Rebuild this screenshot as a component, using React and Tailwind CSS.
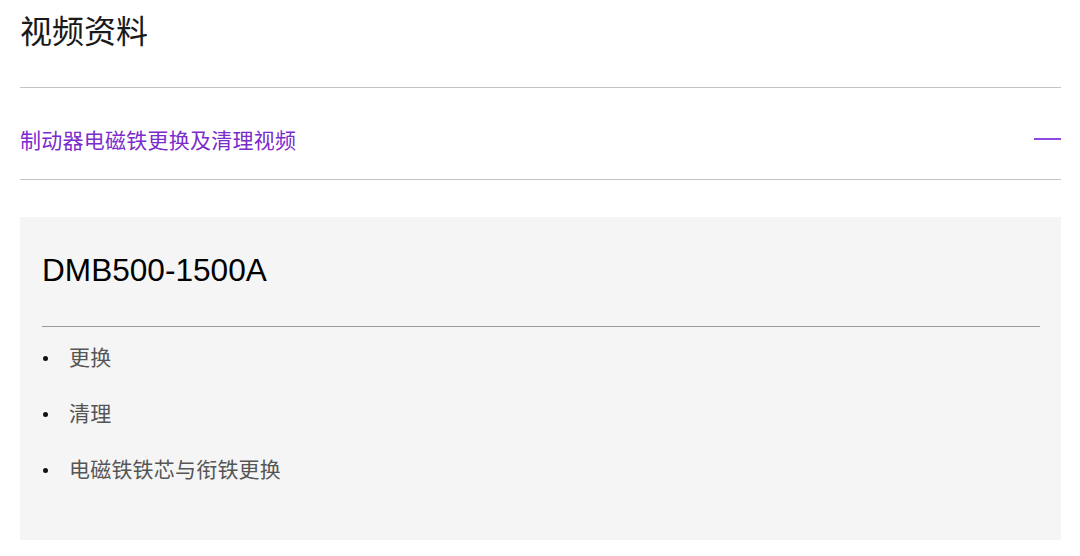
export default function App() {
  const items = ["更换", "清理", "电磁铁铁芯与衔铁更换"];
  return (
    <div
      className="w-[1080px] h-[556px] bg-white overflow-hidden px-[20px] pt-[12px]"
      style={{ fontFamily: '"Liberation Sans", Arial, "Noto Sans CJK SC", sans-serif' }}
    >
      <div className="w-[1041px]">
        <h1 className="text-[32px] leading-[40px] text-[#1a1a1a] font-normal m-0">视频资料</h1>
        <div className="mt-[35px] border-t border-[#c4c4c4]" />
        <div className="flex items-center justify-between pt-[38px] pb-[23px] border-b border-[#c4c4c4]">
          <span className="text-[21px] leading-[30px] tracking-[0.25px] text-[#7a2ccc]">制动器电磁铁更换及清理视频</span>
          <span className="block w-[27px] h-[2px] bg-[#8a4ae0] mb-[4px]" />
        </div>
        <div className="mt-[37px] bg-[#f5f5f5] pl-[22px] pr-[21px] pt-[33px] pb-[56px]">
          <div className="text-[31.6px] leading-[40px] text-black">DMB500-1500A</div>
          <div className="mt-[36px] border-t border-[#999999]" />
          <ul className="pt-[17px] flex flex-col gap-[28px]">
            {items.map((t) => (
              <li key={t} className="flex items-center h-[28px]">
                <span className="block w-[5px] h-[5px] rounded-full bg-[#111] ml-[1px] mt-[1px]" />
                <span className="ml-[21px] text-[21px] leading-[28px] tracking-[0.2px] text-[#555555]">{t}</span>
              </li>
            ))}
          </ul>
        </div>
      </div>
    </div>
  );
}
